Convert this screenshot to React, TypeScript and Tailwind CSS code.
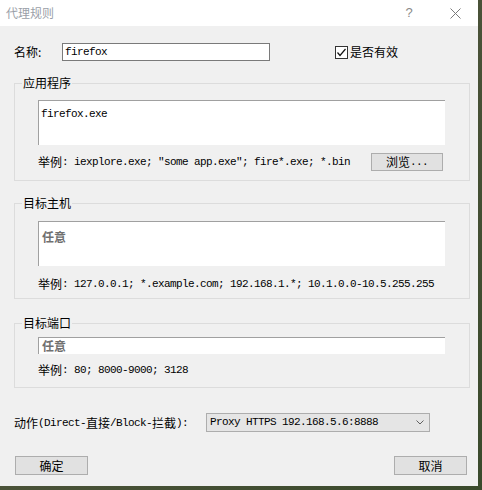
const cjk = "font-['Noto_Sans_CJK_SC','Noto_Sans',sans-serif]";
const mono =
  "font-['Liberation_Mono','Noto_Sans_CJK_SC',monospace] text-[11px] tracking-[-0.6px] whitespace-pre";

function M({ children }: { children: React.ReactNode }) {
  return <span className={mono}>{children}</span>;
}

function Example({ text }: { text: string }) {
  return (
    <div className="flex items-center h-[16px] leading-[16px] text-[12px] text-black">
      <span>举例</span>
      <M>{text}</M>
    </div>
  );
}

function Group({ title, children, className = "" }: { title: string; children: React.ReactNode; className?: string }) {
  return (
    <fieldset className={`mx-[14px] w-[456px] border border-[#dcdcdc] ${className}`}>
      <legend className="ml-[7px] px-[1px] text-[12px] leading-[16px] text-black">{title}</legend>
      {children}
    </fieldset>
  );
}

function Button({ children, className = "" }: { children: React.ReactNode; className?: string }) {
  return (
    <div
      className={`flex items-center justify-center bg-[#e1e1e1] border border-[#adadad] text-[12px] leading-[16px] text-black ${className}`}
    >
      {children}
    </div>
  );
}

export default function App() {
  return (
    <div className={`w-[482px] h-[490px] bg-gradient-to-br from-[#2f3426] via-[#4a5238] to-[#3a4a2c] ${cjk}`}>
      <div className="w-[478px] h-[486px] bg-[#f0f0f0] flex flex-col">
        {/* Title bar */}
        <div className="h-[26px] bg-white flex items-center">
          <span className="pl-[6px] text-[12px] leading-[16px] text-[#9aa0a8]">代理规则</span>
          <div className="ml-auto flex h-full">
            <div className="w-[46px] h-full flex items-center justify-center text-[13px] text-[#8a8a8a] font-['Liberation_Sans',sans-serif]">
              ?
            </div>
            <div className="w-[46px] h-full flex items-center justify-center">
              <svg width="11" height="11" viewBox="0 0 11 11">
                <path d="M0.5 0.5 L10.5 10.5 M10.5 0.5 L0.5 10.5" stroke="#7a7a7a" strokeWidth="1" />
              </svg>
            </div>
          </div>
        </div>

        {/* Name row */}
        <div className="mt-[17px] px-[14px] h-[18px] flex items-center">
          <span className="w-[48px] text-[12px] leading-[16px] text-black">名称:</span>
          <div className="w-[208px] h-[18px] border border-[#7a7a7a] bg-white flex items-center pl-[2px]">
            <M>firefox</M>
          </div>
          <div className="ml-[65px] w-[13px] h-[13px] border border-[#333] bg-white flex items-center justify-center">
            <svg width="11" height="11" viewBox="0 0 11 11">
              <path d="M1.5 5.5 L4 8.5 L9.5 2" stroke="#111" strokeWidth="1.2" fill="none" />
            </svg>
          </div>
          <span className="ml-[2px] text-[12px] leading-[16px] text-black">是否有效</span>
        </div>

        {/* 应用程序 */}
        <Group title="应用程序" className="mt-[14px]">
          <div className="px-[23px] pb-[9px]">
            <div className="mt-[9px] w-[407px] h-[45px] bg-white border-t border-l border-[#a0a0a0] pl-[2px] pt-[1px] leading-[16px]">
              <M>firefox.exe</M>
            </div>
            <div className="mt-[8px] h-[18px] flex items-center">
              <Example text={': iexplore.exe; "some app.exe"; fire*.exe; *.bin'} />
              <Button className="ml-auto mr-[3px] w-[72px] h-[18px]">
                <span>浏览</span>
                <M>...</M>
              </Button>
            </div>
          </div>
        </Group>

        {/* 目标主机 */}
        <Group title="目标主机" className="mt-[14px]">
          <div className="px-[23px] pb-[6px]">
            <div className="mt-[10px] w-[407px] h-[45px] bg-white border-t border-l border-[#a0a0a0] pl-[3px] pt-[1px]">
              <span className="text-[12px] leading-[16px] font-bold text-[#707070]">任意</span>
            </div>
            <div className="mt-[10px]">
              <Example text=": 127.0.0.1; *.example.com; 192.168.1.*; 10.1.0.0-10.5.255.255" />
            </div>
          </div>
        </Group>

        {/* 目标端口 */}
        <Group title="目标端口" className="mt-[16px]">
          <div className="px-[23px] pb-[9px]">
            <div className="mt-[6px] w-[407px] h-[17px] bg-white border-t border-l border-[#a0a0a0] pl-[3px] flex items-center">
              <span className="text-[12px] leading-[16px] font-bold text-[#707070]">任意</span>
            </div>
            <div className="mt-[8px]">
              <Example text=": 80; 8000-9000; 3128" />
            </div>
          </div>
        </Group>

        {/* Action row */}
        <div className="mt-[25px] px-[14px] h-[19px] flex items-center">
          <div className="w-[192px] flex items-center text-[12px] leading-[16px] text-black">
            <span>动作</span>
            <M>(Direct-</M>
            <span>直接</span>
            <M>/Block-</M>
            <span>拦截</span>
            <M>):</M>
          </div>
          <div className="w-[224px] h-[19px] border border-[#adadad] bg-[#e5e5e5] flex items-center pl-[3px] pr-[5px]">
            <M>Proxy HTTPS 192.168.5.6:8888</M>
            <svg className="ml-auto" width="8" height="5" viewBox="0 0 8 5">
              <path d="M0.5 0.5 L4 4 L7.5 0.5" stroke="#606060" strokeWidth="1" fill="none" />
            </svg>
          </div>
        </div>

        {/* Buttons */}
        <div className="mt-[24px] pl-[15px] pr-[11px] flex justify-between">
          <Button className="w-[73px] h-[19px]">确定</Button>
          <Button className="w-[73px] h-[19px]">取消</Button>
        </div>
      </div>
    </div>
  );
}
